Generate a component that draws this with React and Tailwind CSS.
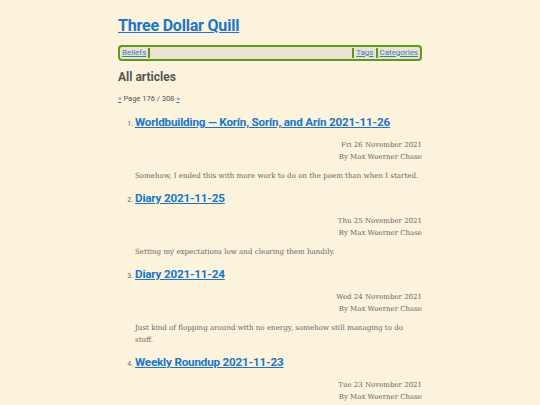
const posts = [
  {
    title: 'Worldbuilding — Korín, Sorín, and Arín 2021-11-26',
    date: 'Fri 26 November 2021',
    summary: 'Somehow, I ended this with more work to do on the poem than when I started.',
  },
  {
    title: 'Diary 2021-11-25',
    date: 'Thu 25 November 2021',
    summary: 'Setting my expectations low and clearing them handily.',
  },
  {
    title: 'Diary 2021-11-24',
    date: 'Wed 24 November 2021',
    summary: 'Just kind of flopping around with no energy, somehow still managing to do stuff.',
  },
  {
    title: 'Weekly Roundup 2021-11-23',
    date: 'Tue 23 November 2021',
    summary: '',
  },
];

const sans = { fontFamily: 'Roboto, Lato, sans-serif' };

export default function App() {
  return (
    <div className="min-h-screen bg-[#fcf3dc] text-[#555]" style={{ fontFamily: '"DejaVu Serif", serif' }}>
      <div className="w-[304px] mx-auto pt-[15px]">
        {/* Site title */}
        <h1 className="text-[16px] leading-[22px] font-bold tracking-[-0.2px]" style={sans}>
          <a href="#" className="text-[#1b76c9] underline">Three Dollar Quill</a>
        </h1>

        {/* Nav bar */}
        <nav
          className="mt-[8px] flex items-center h-[16px] rounded-[4px] border-2 border-[#5d9a1c] bg-[#ebe3d0] px-[2px] text-[8px] leading-[10px]"
          style={sans}
        >
          <a href="#" className="text-[#3b7bb8] underline">Beliefs</a>
          <span className="ml-[2px] w-[2px] h-[10px] bg-[#5d9a1c]" />
          <div className="flex-1" />
          <span className="w-[2px] h-[10px] bg-[#5d9a1c]" />
          <a href="#" className="ml-[2px] text-[#3b7bb8] underline">Tags</a>
          <span className="ml-[2px] w-[2px] h-[10px] bg-[#5d9a1c]" />
          <a href="#" className="ml-[2px] text-[#3b7bb8] underline">Categories</a>
        </nav>

        <h2 className="mt-[8px] text-[12px] leading-[16px] font-bold text-[#555]" style={sans}>
          All articles
        </h2>

        <p className="mt-[9px] text-[7.5px] leading-[10px] text-[#555]" style={sans}>
          <a href="#" className="text-[#3b7bb8] underline">«</a> Page 176 / 308{' '}
          <a href="#" className="text-[#3b7bb8] underline">»</a>
        </p>

        {/* Articles */}
        <ol className="mt-[9px] pl-[17px]">
          {posts.map((post, i) => (
            <li key={post.title} className="mb-[7px]">
              <div className="flex items-baseline gap-[2px]">
                <span className="text-[7px] w-[8px] text-right -ml-[10px] text-[#666]" style={sans}>
                  {i + 1}.
                </span>
                <a
                  href="#"
                  className="text-[11.7px] leading-[18px] font-bold text-[#1b76c9] underline whitespace-nowrap tracking-[-0.2px]"
                  style={sans}
                >
                  {post.title}
                </a>
              </div>
              <div className="mt-[8px] text-right text-[7px] leading-[12px] text-[#666]">
                <div>{post.date}</div>
                <div>By Max Woerner Chase</div>
              </div>
              {post.summary && (
                <p className="mt-[7px] text-[7.1px] leading-[12px] text-[#666]">{post.summary}</p>
              )}
            </li>
          ))}
        </ol>
      </div>
    </div>
  );
}
